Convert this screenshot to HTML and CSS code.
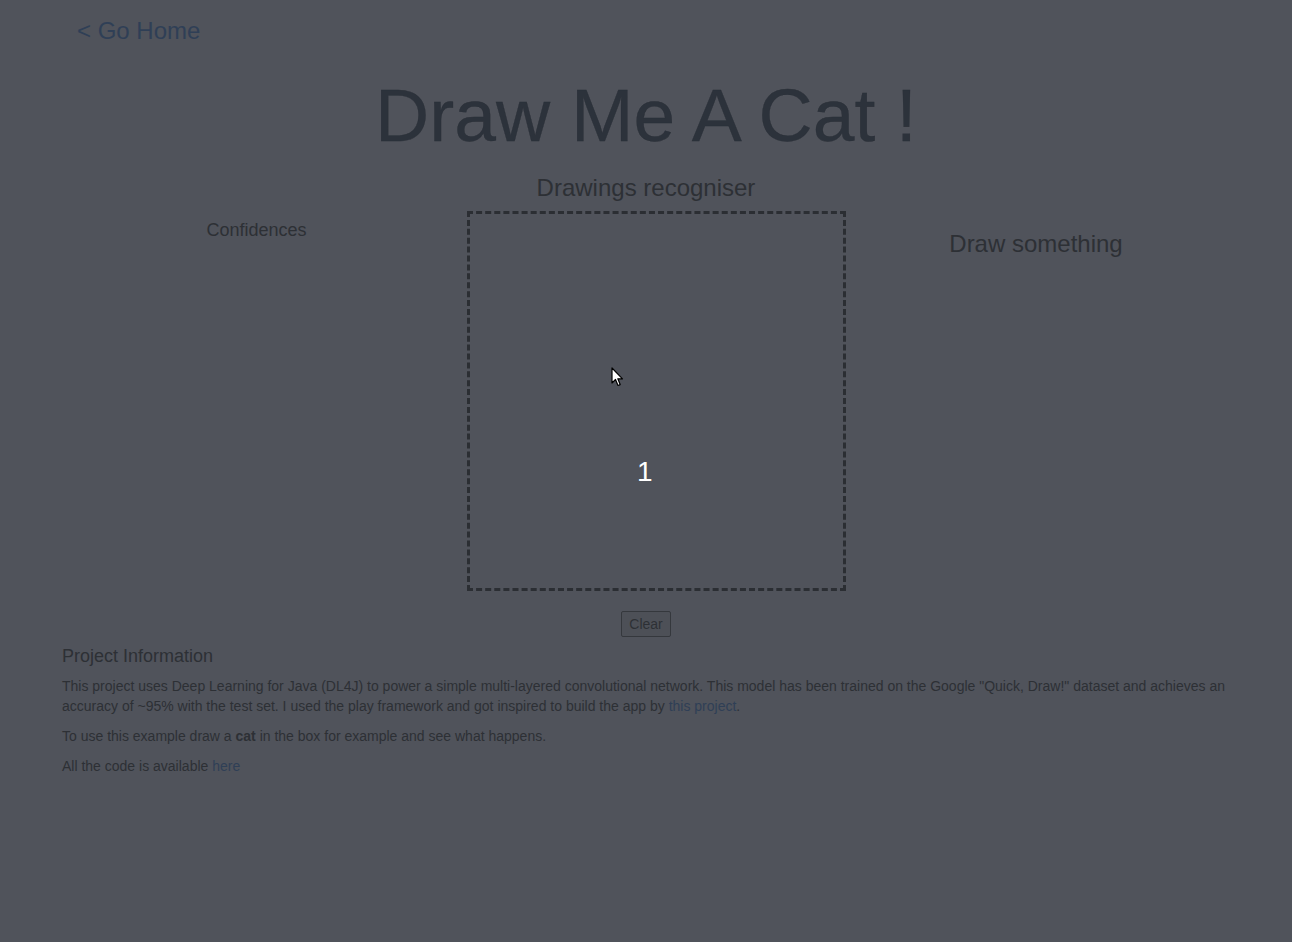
FILE: index.html
```html
<!DOCTYPE html>
<html>
<head>
<meta charset="utf-8">
<title>Draw Me A Cat</title>
<link rel="stylesheet" href="styles.css">
</head>
<body>
<div class="container">
  <nav class="topnav"><a class="home-link" href="#">&lt; Go Home</a></nav>
  <h1 class="title">Draw Me A Cat !</h1>
  <h3 class="subtitle">Drawings recogniser</h3>
  <div class="row">
    <div class="col col-left">
      <h4 class="col-heading">Confidences</h4>
    </div>
    <div class="col col-mid">
      <div class="canvas-box">
        <span class="countdown">1</span>
        <svg class="cursor" width="14" height="22" viewBox="0 0 14 22"><path d="M1 1 L1 16 L4.5 12.5 L7 18.5 L9.2 17.6 L6.8 11.8 L11.5 11.8 Z" fill="#fff" stroke="#000" stroke-width="1.2" stroke-linejoin="round"/></svg>
      </div>
    </div>
    <div class="col col-right">
      <h3 class="prediction">Draw something</h3>
    </div>
  </div>
  <div class="actions"><button class="btn-clear">Clear</button></div>
  <section class="info">
    <h4 class="info-heading">Project Information</h4>
    <p>This project uses Deep Learning for Java (DL4J) to power a simple multi-layered convolutional network. This model has been trained on the Google "Quick, Draw!" dataset and achieves an accuracy of ~95% with the test set. I used the play framework and got inspired to build the app by <a href="#">this project</a>.</p>
    <p>To use this example draw a <b>cat</b> in the box for example and see what happens.</p>
    <p>All the code is available <a href="#">here</a></p>
  </section>
</div>
</body>
</html>
```

FILE: styles.css
```css
html, body {
  margin: 0;
  padding: 0;
  background: #50535b;
  height: 100%;
}
body {
  font-family: "Liberation Sans", Arial, Helvetica, sans-serif;
  color: #2d3035;
  font-size: 14px;
  line-height: 20px;
}
.container {
  width: 1170px;
  margin: 0 auto;
}
a { color: #2f3f56; text-decoration: none; }
.topnav {
  padding: 17px 16px 0;
  height: 28px;
}
.home-link {
  font-size: 24px;
  line-height: 28px;
}
.title {
  font-weight: normal;
  font-size: 75px;
  line-height: 80px;
  margin: 30px 0 0;
  text-align: center;
  color: #2c323b;
  -webkit-text-stroke: 0.3px #2a2f37;
}
.subtitle {
  font-weight: normal;
  font-size: 24px;
  line-height: 28px;
  margin: 19px 0 0;
  text-align: center;
}
.row {
  display: flex;
  margin-top: 9px;
}
.col { width: 390px; }
.col-left, .col-right { text-align: center; }
.col-left { padding-left: 1px; box-sizing: border-box; }
.col-mid { padding-left: 16px; box-sizing: border-box; }
.col-heading {
  font-weight: normal;
  font-size: 18px;
  line-height: 20px;
  margin: 9px 0 0;
}
.prediction {
  font-weight: normal;
  font-size: 24px;
  line-height: 28px;
  margin: 19px 0 0;
}
.canvas-box {
  position: relative;
  width: 373px;
  height: 374px;
  border: 3px dashed #2b2e33;
}
.countdown {
  position: absolute;
  left: 167px;
  top: 242px;
  color: #ffffff;
  font-size: 28px;
  line-height: 32px;
}
.cursor {
  position: absolute;
  left: 141px;
  top: 153px;
}
.actions {
  text-align: center;
  margin-top: 20px;
  height: 26px;
}
.btn-clear {
  font-family: "Liberation Sans", Arial, sans-serif;
  font-size: 14px;
  line-height: 20px;
  color: #2d3035;
  background: #4d5057;
  border: 1px solid #35383d;
  border-radius: 2px;
  padding: 2px 7px;
  margin: 0;
  vertical-align: top;
}
.info { padding: 0 1px; }
.info-heading {
  font-weight: normal;
  font-size: 18px;
  line-height: 20px;
  margin: 9px 0 10px;
}
.info p { margin: 0 0 10px; }
```
